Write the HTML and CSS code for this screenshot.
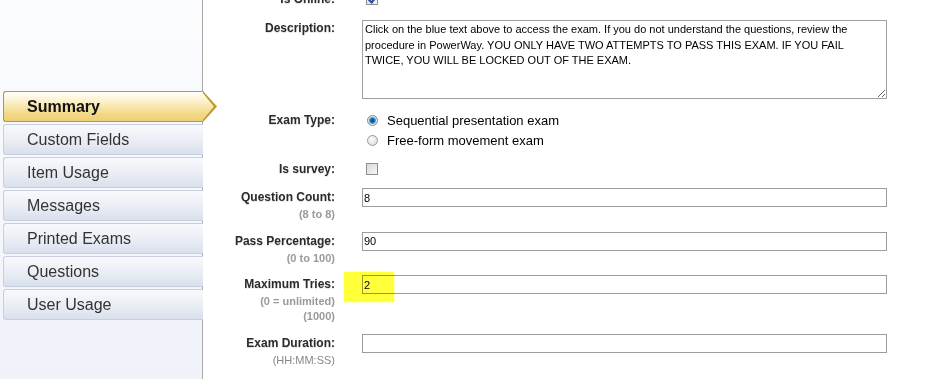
FILE: index.html
```html
<!DOCTYPE html>
<html lang="en">
<head>
    <meta charset="UTF-8">
    <title>Exam Summary</title>
    <link rel="stylesheet" href="styles.css">
</head>
<body>
    <div class="sidebar">
        <div class="tab active">Summary</div>
        <div class="tab">Custom Fields</div>
        <div class="tab">Item Usage</div>
        <div class="tab">Messages</div>
        <div class="tab">Printed Exams</div>
        <div class="tab">Questions</div>
        <div class="tab">User Usage</div>
    </div>

    <div class="main">
        <div class="row row-online">
            <div class="label">Is Online:</div>
            <div class="field"><span class="check checked"></span></div>
        </div>

        <div class="row row-desc">
            <div class="label">Description:</div>
            <div class="field">
                <textarea class="desc" readonly>Click on the blue text above to access the exam. If you do not understand the questions, review the procedure in PowerWay. YOU ONLY HAVE TWO ATTEMPTS TO PASS THIS EXAM. IF YOU FAIL TWICE, YOU WILL BE LOCKED OUT OF THE EXAM.</textarea>
            </div>
        </div>

        <div class="row row-type">
            <div class="label">Exam Type:</div>
            <div class="field">
                <div class="option"><span class="radio on"></span>Sequential presentation exam</div>
                <div class="option"><span class="radio"></span>Free-form movement exam</div>
            </div>
        </div>

        <div class="row row-survey">
            <div class="label">Is survey:</div>
            <div class="field"><span class="check"></span></div>
        </div>

        <div class="row">
            <div class="label">Question Count:<span class="sub">(8 to 8)</span></div>
            <div class="field"><input class="text" type="text" value="8"></div>
        </div>

        <div class="row">
            <div class="label">Pass Percentage:<span class="sub">(0 to 100)</span></div>
            <div class="field"><input class="text" type="text" value="90"></div>
        </div>

        <div class="row">
            <div class="label">Maximum Tries:<span class="sub">(0 = unlimited)</span><span class="sub">(1000)</span></div>
            <div class="field marked">
                <input class="text" type="text" value="2">
                <span class="highlight"></span>
            </div>
        </div>

        <div class="row row-last">
            <div class="label">Exam Duration:<span class="sub plain">(HH:MM:SS)</span></div>
            <div class="field"><input class="text" type="text" value=""></div>
        </div>
    </div>
</body>
</html>
```

FILE: styles.css
```css
html, body {
    height: 100%;
}
body {
    margin: 0;
    display: flex;
    overflow: hidden;
    background: #fff;
    font-family: "Liberation Sans", Arial, sans-serif;
    color: #222;
}

/* left tab column */
.sidebar {
    width: 203px;
    flex-shrink: 0;
    border-right: 1px solid #a9a9a9;
    background: linear-gradient(#fbfcfe, #eff2f9);
    padding: 91px 0 0 3px;
    box-sizing: border-box;
    display: flex;
    flex-direction: column;
    gap: 2px;
}
.tab {
    height: 31px;
    box-sizing: border-box;
    margin-right: -1px;
    padding-left: 23px;
    border: 1px solid #c7cfde;
    border-right: none;
    border-radius: 3px 0 0 3px;
    background: linear-gradient(#f8f9fc, #e9edf4 55%, #d9e0ec);
    font-size: 16px;
    line-height: 29px;
    color: #333;
}
.tab.active {
    position: relative;
    border-color: #b9982f;
    background: linear-gradient(#fffefa, #fbefc6 35%, #f1d680 80%, #eed07a);
    font-weight: bold;
    color: #111;
    z-index: 2;
}
.tab.active::before {
    content: "";
    position: absolute;
    top: -1px;
    right: -14px;
    width: 14px;
    height: 31px;
    background: #b9982f;
    clip-path: polygon(0 0, 100% 50%, 0 100%);
}
.tab.active::after {
    content: "";
    position: absolute;
    top: 0;
    right: -12px;
    width: 13px;
    height: 29px;
    background: linear-gradient(#fffefa, #fbefc6 35%, #f1d680 80%, #eed07a);
    clip-path: polygon(0 0, 92% 50%, 0 100%);
}

/* form */
.main {
    flex: 1;
    padding-right: 58px;
}
.row {
    display: grid;
    grid-template-columns: 132px 525px;
    column-gap: 27px;
    margin-top: 10px;
}
.row-online {
    margin-top: -10px;
    height: 18px;
}
.row-desc {
    margin-top: 12px;
}
.row-type {
    margin-top: 11px;
}
.row-last {
    margin-top: 11px;
}
.label {
    text-align: right;
    font-size: 12px;
    font-weight: bold;
    line-height: 19px;
    color: #2b2b2b;
    text-shadow: 0 1px 1px rgba(0, 0, 0, 0.12);
}
.row-online .label,
.row-survey .label {
    line-height: 18px;
}
.row-desc .label {
    line-height: 16px;
}
.row-type .label {
    line-height: 20px;
}
.sub {
    display: block;
    font-size: 11px;
    line-height: 14.5px;
    color: #9a9a9a;
    text-shadow: none;
}
.sub.plain {
    font-weight: normal;
    color: #888;
}
.field {
    position: relative;
    font-size: 13px;
    color: #000;
}

.desc {
    display: block;
    width: 525px;
    height: 79px;
    box-sizing: border-box;
    margin: 0;
    padding: 1px 2px;
    border: 1px solid #a0a0a0;
    font-family: "Liberation Sans", Arial, sans-serif;
    font-size: 11px;
    line-height: 15.5px;
    color: #000;
    resize: both;
    outline: none;
}

.text {
    display: block;
    width: 525px;
    height: 19px;
    box-sizing: border-box;
    margin: 0;
    padding: 0 1px;
    border: 1px solid #9c9c9c;
    background: transparent;
    font-family: "Liberation Sans", Arial, sans-serif;
    font-size: 11px;
    color: #000;
    outline: none;
}

.option {
    display: flex;
    align-items: center;
    height: 20px;
}
.radio {
    width: 11px;
    height: 11px;
    box-sizing: border-box;
    margin: 0 9px 0 5px;
    border-radius: 50%;
    border: 1px solid #9a9a9a;
    background: radial-gradient(circle at 40% 35%, #fdfdfd, #d6d6d6);
}
.radio.on {
    border-color: #7c8a96;
    background: radial-gradient(circle, #0b3f6c 0, #1a78bd 2.2px, #6fb6e4 3.4px, #e8eef2 3.8px, #c8cdd2 5.5px);
}

.check {
    display: block;
    width: 12px;
    height: 12px;
    box-sizing: border-box;
    margin: 3px 0 0 4px;
    border: 1px solid #8e8e8e;
    background: linear-gradient(135deg, #d9d9d9, #f6f6f6);
}
.check.checked {
    position: relative;
}
.check.checked::after {
    content: "";
    position: absolute;
    left: 3px;
    top: 1px;
    width: 3px;
    height: 6px;
    border: solid #2a4d9c;
    border-width: 0 2px 2px 0;
    transform: rotate(40deg);
}

.highlight {
    position: absolute;
    left: -18px;
    top: -3px;
    width: 50px;
    height: 30px;
    background: #ffff3a;
    mix-blend-mode: multiply;
    box-shadow: 0 0 2px #ffff60;
}
```
